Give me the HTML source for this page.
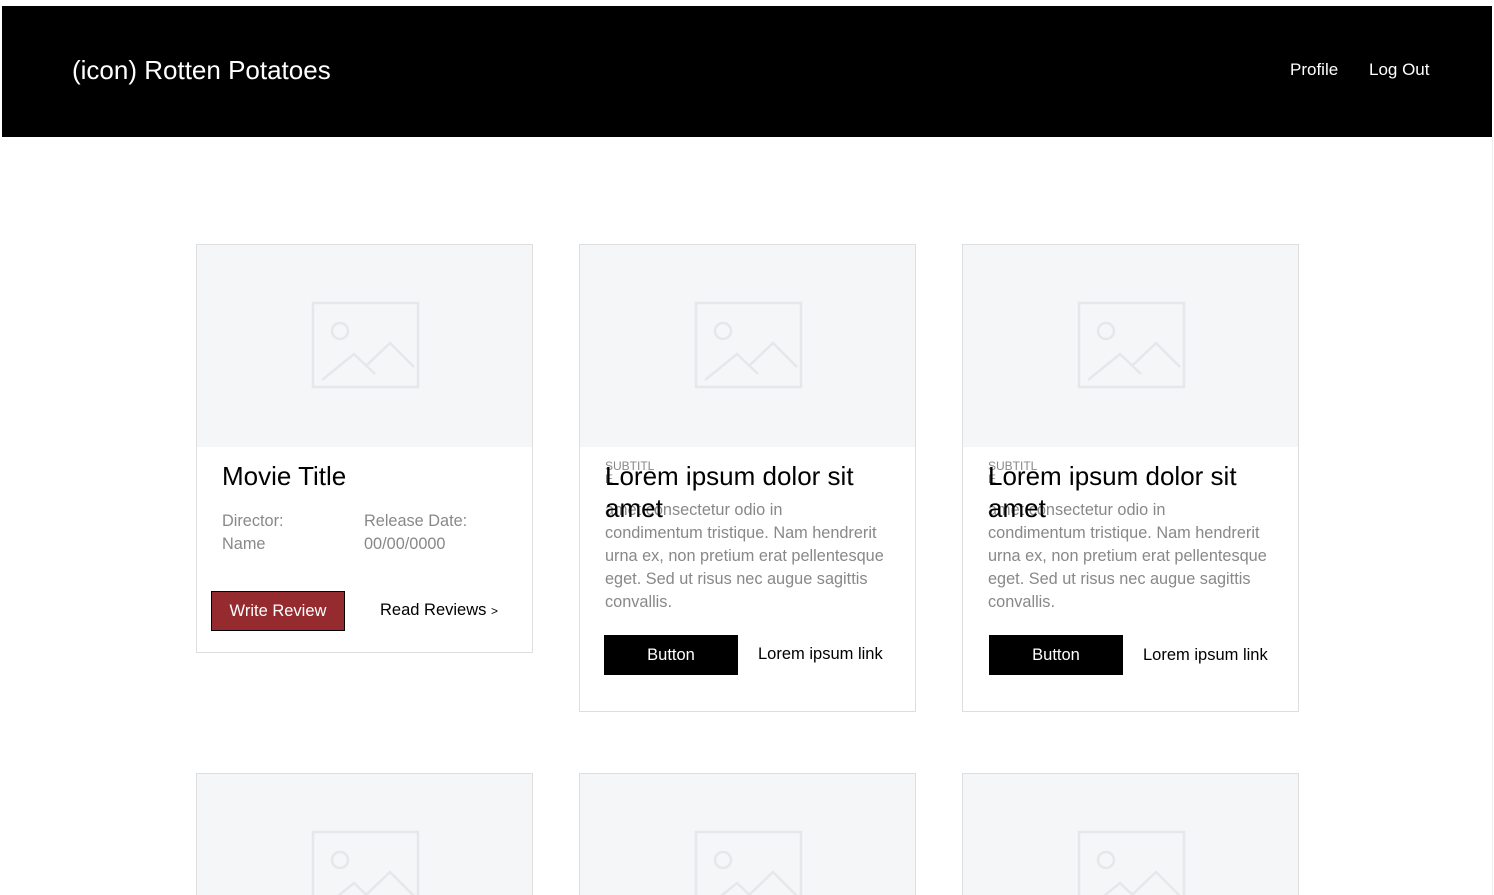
<!DOCTYPE html>
<html style="height:895px;overflow:hidden"><head><style>
*{margin:0;padding:0;box-sizing:border-box}
body{width:1494px;height:895px;background:#fff;font-family:"Liberation Sans",sans-serif;position:relative;overflow:hidden}
.hdr{position:absolute;left:2px;top:6px;width:1490px;height:131px;background:#000;color:#fff}
.logo{position:absolute;left:70px;top:49px;font-size:26px}
.nav{position:absolute;top:54px;font-size:17px}
.card{position:absolute;width:337px;border:1px solid #dedede;background:#fff;overflow:hidden}
.img{height:202px;background:#f5f6f8;position:relative}
.img svg{position:absolute;left:114px;top:56px}
.a{position:absolute;white-space:nowrap}
.g{color:#888;font-size:16.3px}
</style></head><body>
<div class="hdr">
<div class="logo">(icon) Rotten Potatoes</div>
<div class="nav" style="left:1288px">Profile</div>
<div class="nav" style="left:1367px">Log Out</div>
</div>
<div style="position:absolute;right:1px;top:137px;width:1px;height:758px;background:#eee"></div>

<div class="card" style="left:196px;top:244px;height:409px">
<div class="img"><svg width="110" height="90" viewBox="0 0 110 90" fill="none" stroke="#e6e7ea" stroke-width="2.5"><rect x="2" y="2" width="105" height="84"/><circle cx="29" cy="30" r="8"/><path d="M11 79L43 53L64 73M56 64L79 42L103 66"/></svg></div>
<div class="a" style="left:25px;top:216px;font-size:26px;color:#000">Movie Title</div>
<div class="a g" style="left:25px;top:265px;line-height:23px">Director:<br>Name</div>
<div class="a g" style="left:167px;top:265px;line-height:23px">Release Date:<br>00/00/0000</div>
<div class="a" style="left:14px;top:346px;width:134px;height:40px;background:#952a2f;border:1px solid #000;color:#fff;font-size:16.5px;text-align:center;line-height:38px">Write Review</div>
<div class="a" style="left:183px;top:356px;font-size:16.5px">Read Reviews <span style="font-size:12px">&gt;</span></div>
</div>

<div class="card" style="left:579px;top:244px;height:468px">
<div class="img"><svg width="110" height="90" viewBox="0 0 110 90" fill="none" stroke="#e6e7ea" stroke-width="2.5"><rect x="2" y="2" width="105" height="84"/><circle cx="29" cy="30" r="8"/><path d="M11 79L43 53L64 73M56 64L79 42L103 66"/></svg></div>
<div class="a" style="left:25px;top:215px;font-size:12px;color:#888;line-height:13px">SUBTITL<br>E</div>
<div class="a g" style="left:25px;top:254px;line-height:23px">amet consectetur odio in<br>condimentum tristique. Nam hendrerit<br>urna ex, non pretium erat pellentesque<br>eget. Sed ut risus nec augue sagittis<br>convallis.</div>
<div class="a" style="left:25px;top:215px;font-size:26px;line-height:32px;color:#000">Lorem ipsum dolor sit<br>amet</div>
<div class="a" style="left:24px;top:390px;width:134px;height:40px;background:#000;color:#fff;font-size:16.5px;text-align:center;line-height:40px">Button</div>
<div class="a" style="left:178px;top:400px;font-size:16.5px">Lorem ipsum link</div>
</div>

<div class="card" style="left:962px;top:244px;height:468px">
<div class="img"><svg width="110" height="90" viewBox="0 0 110 90" fill="none" stroke="#e6e7ea" stroke-width="2.5"><rect x="2" y="2" width="105" height="84"/><circle cx="29" cy="30" r="8"/><path d="M11 79L43 53L64 73M56 64L79 42L103 66"/></svg></div>
<div class="a" style="left:25px;top:215px;font-size:12px;color:#888;line-height:13px">SUBTITL<br>E</div>
<div class="a g" style="left:25px;top:254px;line-height:23px">amet consectetur odio in<br>condimentum tristique. Nam hendrerit<br>urna ex, non pretium erat pellentesque<br>eget. Sed ut risus nec augue sagittis<br>convallis.</div>
<div class="a" style="left:25px;top:215px;font-size:26px;line-height:32px;color:#000">Lorem ipsum dolor sit<br>amet</div>
<div class="a" style="left:26px;top:390px;width:134px;height:40px;background:#000;color:#fff;font-size:16.5px;text-align:center;line-height:40px">Button</div>
<div class="a" style="left:180px;top:401px;font-size:16.5px">Lorem ipsum link</div>
</div>

<div class="card" style="left:196px;top:773px;height:122px;border-bottom:0"><div class="img"><svg width="110" height="90" viewBox="0 0 110 90" fill="none" stroke="#e6e7ea" stroke-width="2.5"><rect x="2" y="2" width="105" height="84"/><circle cx="29" cy="30" r="8"/><path d="M11 79L43 53L64 73M56 64L79 42L103 66"/></svg></div></div>
<div class="card" style="left:579px;top:773px;height:122px;border-bottom:0"><div class="img"><svg width="110" height="90" viewBox="0 0 110 90" fill="none" stroke="#e6e7ea" stroke-width="2.5"><rect x="2" y="2" width="105" height="84"/><circle cx="29" cy="30" r="8"/><path d="M11 79L43 53L64 73M56 64L79 42L103 66"/></svg></div></div>
<div class="card" style="left:962px;top:773px;height:122px;border-bottom:0"><div class="img"><svg width="110" height="90" viewBox="0 0 110 90" fill="none" stroke="#e6e7ea" stroke-width="2.5"><rect x="2" y="2" width="105" height="84"/><circle cx="29" cy="30" r="8"/><path d="M11 79L43 53L64 73M56 64L79 42L103 66"/></svg></div></div>
</body></html>
